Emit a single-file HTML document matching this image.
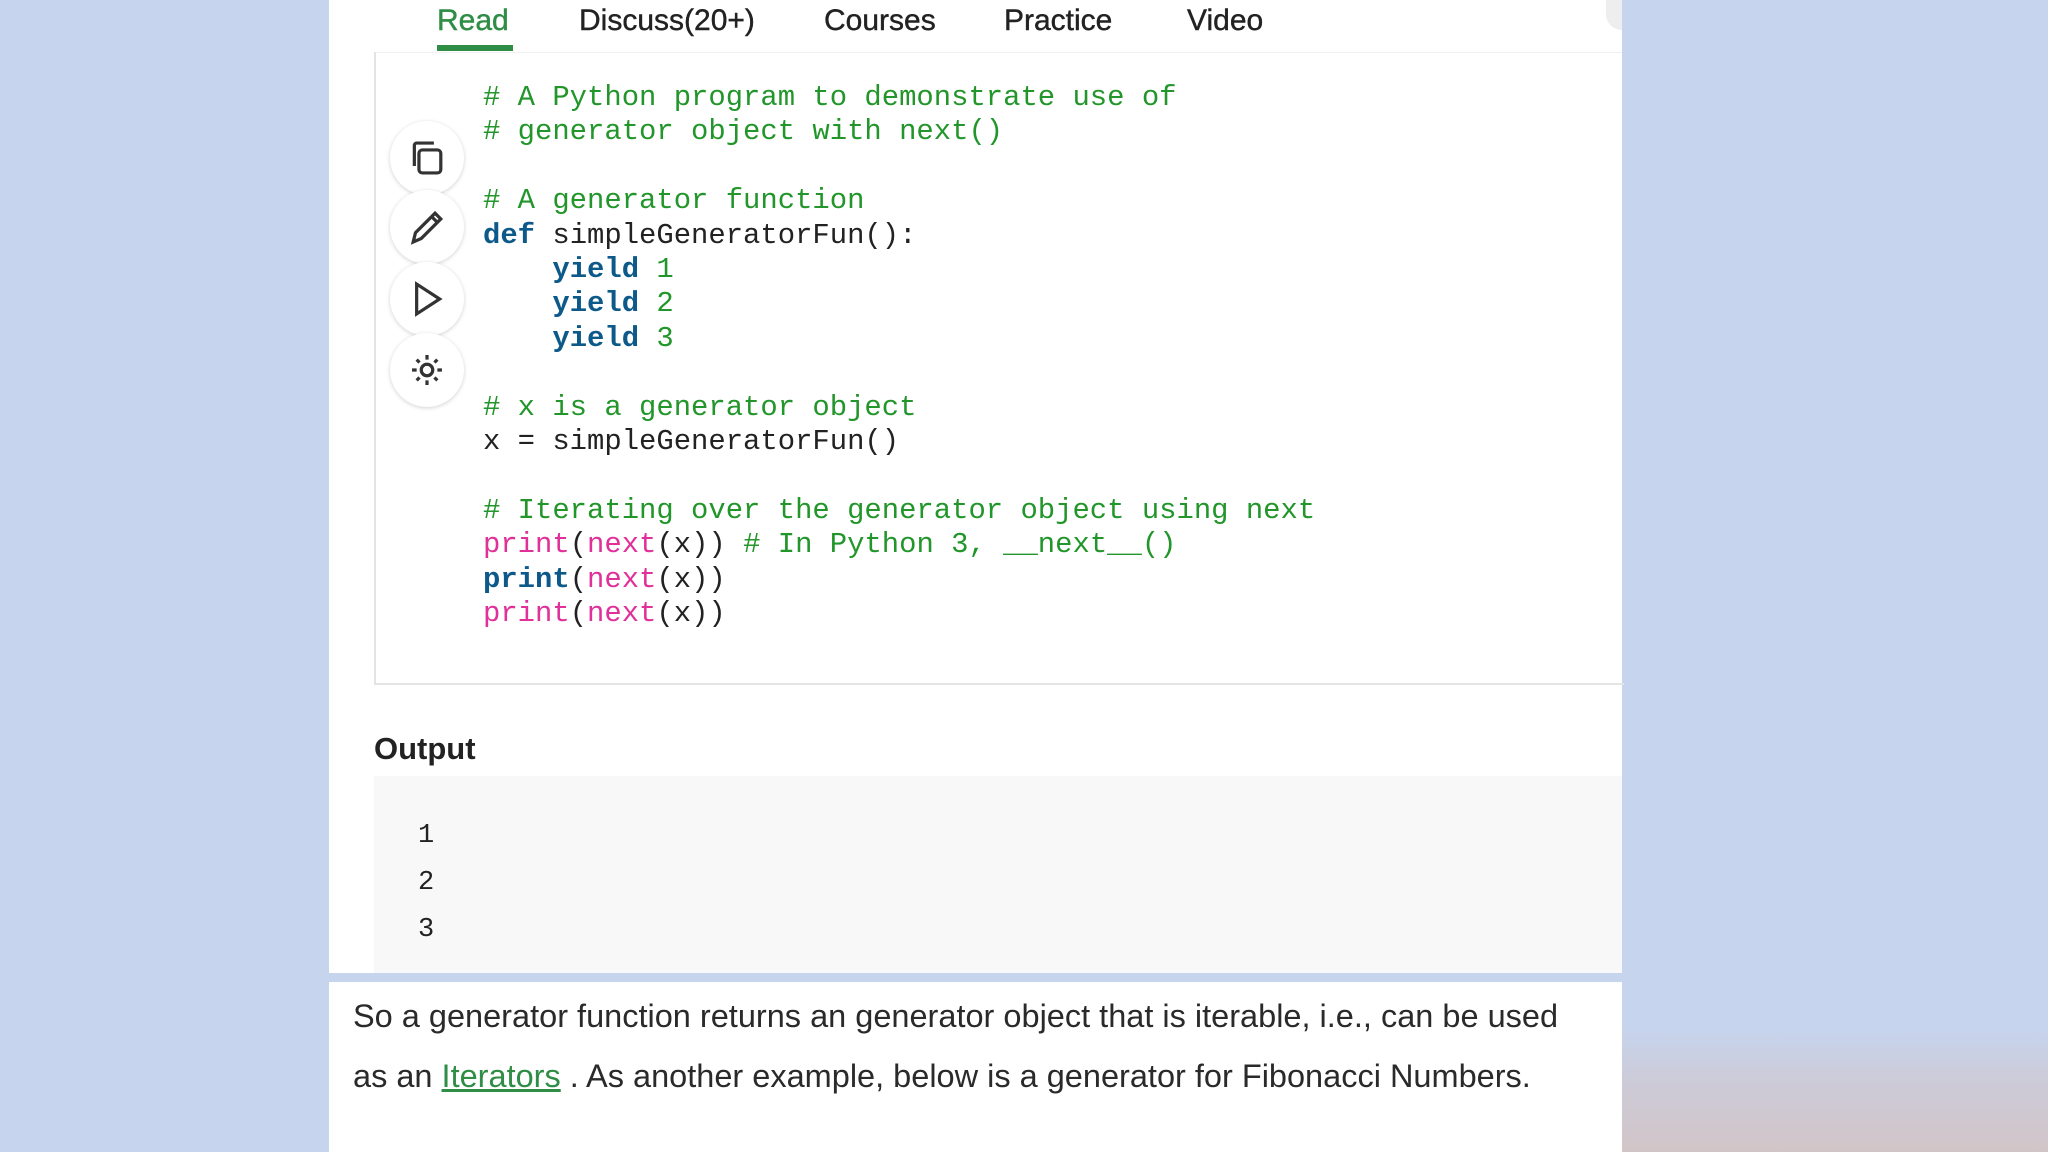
<!DOCTYPE html>
<html><head><meta charset="utf-8"><style>
html,body{margin:0;padding:0}
body{width:2048px;height:1152px;position:relative;overflow:hidden;background:#c7d4ed;font-family:"Liberation Sans",sans-serif}
.grad{position:absolute;left:1622px;top:0;width:426px;height:1152px;background:linear-gradient(#c7d4ed 0,#c7d4ed 1030px,#cccbd8 1080px,#d2c5c8 1152px)}
.panel{position:absolute;left:329px;top:0;width:1293px;height:1152px;background:#fff}
.tab{position:absolute;top:1px;font-size:30px;color:#222;line-height:40px;-webkit-text-stroke:0.4px #222}
.code{position:absolute;left:483px;top:81px;font-family:"Liberation Mono",monospace;font-size:28.9px;line-height:34.4px;white-space:pre;color:#222}
.c{color:#22962a}.k{color:#0d5a8a;font-weight:bold}.n{color:#22962a}.p{color:#e0309a}
.btn{position:absolute;left:390px;width:74px;height:74px;border-radius:50%;background:#fff;box-shadow:0 1px 4px rgba(0,0,0,.18);display:flex;align-items:center;justify-content:center}
</style></head><body>
<div class="grad"></div>
<div class="panel"></div>
<div style="position:absolute;left:1606px;top:0;width:16px;height:30px;border-radius:0 0 0 16px;background:#eee"></div>
<div class="tab" style="left:437px;color:#2f8d46;-webkit-text-stroke:0.4px #2f8d46">Read</div>
<div style="position:absolute;left:437px;top:45px;width:76px;height:6px;background:#2f8d46"></div>
<div class="tab" style="left:579px">Discuss(20+)</div>
<div class="tab" style="left:824px">Courses</div>
<div class="tab" style="left:1004px">Practice</div>
<div class="tab" style="left:1187px">Video</div>
<div style="position:absolute;left:374px;top:52px;width:1248px;height:1px;background:#f0f0f0"></div>
<div style="position:absolute;left:374px;top:52px;width:1248px;height:631px;border-left:2px solid #e4e4e4;border-bottom:2px solid #e4e4e4"></div>
<div class="btn" style="top:121px"><svg width="46" height="46" viewBox="0 0 40 40" fill="none" stroke="#333" stroke-width="2.8"><rect x="13" y="13" width="19" height="20" rx="3"/><path d="M9 27V9a2 2 0 0 1 2-2h15"/></svg></div>
<div class="btn" style="top:190px"><svg width="46" height="46" viewBox="0 0 40 40" fill="none" stroke="#333" stroke-width="2.8"><path d="M8 33l2-8L27 8l5 5-17 17z"/><path d="M24 11l5 5"/></svg></div>
<div class="btn" style="top:262px"><svg width="46" height="46" viewBox="0 0 40 40" fill="none" stroke="#333" stroke-width="2.8"><path d="M11 7v26l20-13z"/></svg></div>
<div class="btn" style="top:333px"><svg width="46" height="46" viewBox="0 0 40 40" fill="none" stroke="#333" stroke-width="2.8"><circle cx="20" cy="20" r="5"/><path d="M20 7v4M20 29v4M7 20h4M29 20h4M11 11l2.5 2.5M26.5 26.5l2.5 2.5M11 29l2.5-2.5M26.5 13.5l2.5-2.5"/></svg></div>
<div class="code"><span class="c"># A Python program to demonstrate use of
# generator object with next()</span>

<span class="c"># A generator function</span>
<span class="k">def</span> simpleGeneratorFun():
    <span class="k">yield</span> <span class="n">1</span>
    <span class="k">yield</span> <span class="n">2</span>
    <span class="k">yield</span> <span class="n">3</span>

<span class="c"># x is a generator object</span>
x = simpleGeneratorFun()

<span class="c"># Iterating over the generator object using next</span>
<span class="p">print</span>(<span class="p">next</span>(x)) <span class="c"># In Python 3, __next__()</span>
<span class="k">print</span>(<span class="p">next</span>(x))
<span class="p">print</span>(<span class="p">next</span>(x))</div>
<div style="position:absolute;left:374px;top:731px;font-size:31px;font-weight:bold;color:#222">Output</div>
<div style="position:absolute;left:374px;top:776px;width:1248px;height:197px;background:#f8f8f8"></div>
<div style="position:absolute;left:418px;top:813px;font-family:'Liberation Mono',monospace;font-size:27px;line-height:47px;color:#222;white-space:pre">1
2
3</div>
<div style="position:absolute;left:329px;top:973px;width:1293px;height:9px;background:#c7d4ed"></div>
<div style="position:absolute;left:353px;top:986px;font-size:32.5px;line-height:60px;color:#2a2a2a;white-space:nowrap">So a generator function returns an generator object that is iterable, i.e., can be used<br>as an <span style="color:#2f8d46;text-decoration:underline">Iterators</span> . As another example, below is a generator for Fibonacci Numbers.</div>
</body></html>
